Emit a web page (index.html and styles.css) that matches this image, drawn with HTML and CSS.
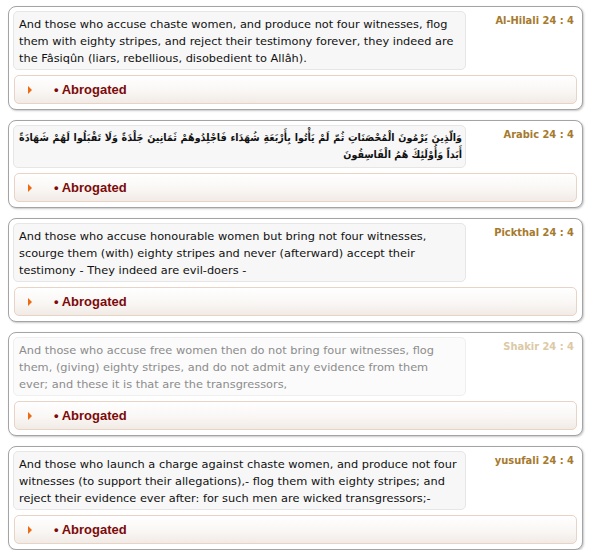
FILE: index.html
```html
<!DOCTYPE html>
<html>
<head>
<meta charset="utf-8">
<link rel="stylesheet" href="styles.css">
</head>
<body>
<div class="list">
  <div class="card">
    <div class="top">
      <div class="verse">And those who accuse chaste women, and produce not four witnesses, flog them with eighty stripes, and reject their testimony forever, they indeed are the Fâsiqûn (liars, rebellious, disobedient to Allâh).</div>
      <div class="label">Al-Hilali 24 : 4</div>
    </div>
    <div class="bar"><span class="arrow"></span><span class="abr">• Abrogated</span></div>
  </div>

  <div class="card">
    <div class="top">
      <div class="verse arabic" dir="rtl" lang="ar">وَالّذِينَ يَرْمُونَ الْمُحْصَنَاتِ ثُمّ لَمْ يَأْتُوا بِأَرْبَعَةِ شُهَدَاء فَاجْلِدُوهُمْ ثَمَانِينَ جَلْدَةً وَلَا تَقْبَلُوا لَهُمْ شَهَادَةً أَبَداً وَأُوْلَئِكَ هُمُ الْفَاسِقُونَ</div>
      <div class="label">Arabic 24 : 4</div>
    </div>
    <div class="bar"><span class="arrow"></span><span class="abr">• Abrogated</span></div>
  </div>

  <div class="card">
    <div class="top">
      <div class="verse">And those who accuse honourable women but bring not four witnesses, scourge them (with) eighty stripes and never (afterward) accept their testimony - They indeed are evil-doers -</div>
      <div class="label">Pickthal 24 : 4</div>
    </div>
    <div class="bar"><span class="arrow"></span><span class="abr">• Abrogated</span></div>
  </div>

  <div class="card faded">
    <div class="top">
      <div class="verse">And those who accuse free women then do not bring four witnesses, flog them, (giving) eighty stripes, and do not admit any evidence from them ever; and these it is that are the transgressors,</div>
      <div class="label">Shakir 24 : 4</div>
    </div>
    <div class="bar"><span class="arrow"></span><span class="abr">• Abrogated</span></div>
  </div>

  <div class="card">
    <div class="top">
      <div class="verse">And those who launch a charge against chaste women, and produce not four witnesses (to support their allegations),- flog them with eighty stripes; and reject their evidence ever after: for such men are wicked transgressors;-</div>
      <div class="label">yusufali 24 : 4</div>
    </div>
    <div class="bar"><span class="arrow"></span><span class="abr">• Abrogated</span></div>
  </div>
</div>
</body>
</html>
```

FILE: styles.css
```css
html, body {
  margin: 0;
  background: #ffffff;
}
body {
  padding: 6px 8px 0 8px;
  font-family: "DejaVu Sans", Verdana, sans-serif;
}
.list {
  display: flex;
  flex-direction: column;
  gap: 10px;
}
.card {
  border: 1px solid #a4a4a4;
  border-radius: 8px;
  padding: 4px 5px 5px 4px;
  box-shadow: 1px 1px 2px rgba(0, 0, 0, 0.22);
  background: #ffffff;
}
.top {
  display: flex;
  align-items: flex-start;
}
.verse {
  width: 453px;
  box-sizing: border-box;
  flex: none;
  background: #f7f7f7;
  border: 1px solid #e6e6e6;
  border-radius: 5px;
  padding: 4px 5px 2px 5px;
  font-size: 11.35px;
  line-height: 17px;
  color: #111111;
}
.verse.arabic {
  font-family: "DejaVu Sans Condensed", "DejaVu Sans", sans-serif;
  font-weight: bold;
  font-size: 10.6px;
  line-height: 17px;
  text-align: justify;
  padding: 3px 3px 4px 5px;
}
.label {
  flex: 1;
  text-align: right;
  padding: 3px 3px 0 0;
  font-family: "DejaVu Sans Condensed", "DejaVu Sans", sans-serif;
  font-weight: bold;
  font-size: 11px;
  line-height: 13px;
  color: #a67a2e;
}
.bar {
  margin: 5px 0 0 1px;
  height: 27px;
  border: 1px solid #e8d3c5;
  border-radius: 5px;
  background: linear-gradient(to bottom, #ffffff 0%, #fbf9f7 45%, #f1ebe6 100%);
  display: flex;
  align-items: center;
}
.arrow {
  width: 0;
  height: 0;
  margin-left: 13px;
  border-top: 4px solid transparent;
  border-bottom: 4px solid transparent;
  border-left: 4px solid #ee6a10;
}
.abr {
  margin-left: 22px;
  font-family: "Liberation Sans", Arial, sans-serif;
  font-weight: bold;
  font-size: 13px;
  color: #7d0a0a;
}
.faded .verse {
  color: #8c8c8c;
  background: #fbfbfb;
  border-color: #efefef;
}
.faded .label {
  color: #dcc9a6;
}
```
